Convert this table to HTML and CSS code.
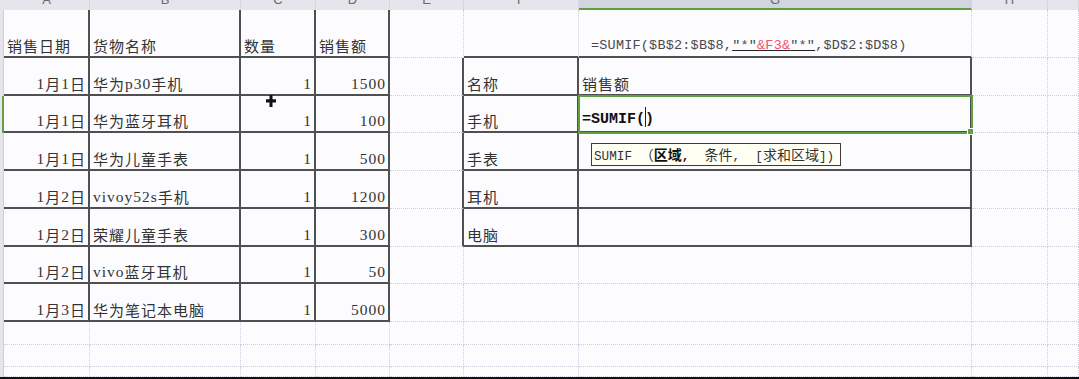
FILE: index.html
```html
<!DOCTYPE html>
<html lang="zh-CN">
<head>
    <meta charset="utf-8">
    <title>销售统计</title>
    <link rel="stylesheet" href="styles.css">
</head>
<body>
    <div id="sheet" class="sheet">
        <svg class="cross" width="10" height="12" viewBox="0 0 10 12">
            <path d="M3.5 0h3v4.2h3.5v3.2h-3.5v4.6h-3v-4.6h-3.5v-3.2h3.5z" fill="#111"/>
        </svg>
    </div>

    <script>
        const COLS = ['A', 'B', 'C', 'D', 'E', 'F', 'G', 'H', 'I'];
        const ROWS = 11;

        const data = {
            1: { A: '销售日期', B: '货物名称', C: '数量', D: '销售额' },
            2: { A: '1月1日', B: '华为p30手机', C: '1', D: '1500', F: '名称', G: '销售额' },
            3: { A: '1月1日', B: '华为蓝牙耳机', C: '1', D: '100', F: '手机' },
            4: { A: '1月1日', B: '华为儿童手表', C: '1', D: '500', F: '手表' },
            5: { A: '1月2日', B: 'vivoy52s手机', C: '1', D: '1200', F: '耳机' },
            6: { A: '1月2日', B: '荣耀儿童手表', C: '1', D: '300', F: '电脑' },
            7: { A: '1月2日', B: 'vivo蓝牙耳机', C: '1', D: '50' },
            8: { A: '1月3日', B: '华为笔记本电脑', C: '1', D: '5000' }
        };

        // cells holding markup instead of plain text
        const special = {
            G1: '<span class="formula">=SUMIF($B$2:$B$8,<u>"*"<em>&amp;F3&amp;</em>"*"</u>,$D$2:$D$8)</span>',
            G3: '<span class="edit">=SUMIF(<i class="caret"></i>)</span>' +
                '<div class="tip"><span class="m">SUMIF </span>（<b>区域<span class="m">,  </span></b>条件<span class="m">,  [</span>求和区域<span class="m">])</span></div>'
        };

        // half-width runs get the narrow latin font
        function latin(text) {
            return text.replace(/[A-Za-z0-9]+/g, m => `<span class="n">${m}</span>`);
        }

        function add(cls, html) {
            const div = document.createElement('div');
            div.className = cls;
            div.innerHTML = html;
            sheet.appendChild(div);
        }

        const sheet = document.getElementById('sheet');

        add('hd corner', '');
        COLS.forEach(c => add('hd' + (c === 'G' ? ' active' : ''), c === 'I' ? '' : `<span>${c}</span>`));

        for (let r = 1; r <= ROWS; r++) {
            add('rh' + (r === 3 ? ' active' : ''), '');
            COLS.forEach(c => {
                let cls = 'c';
                const left = r <= 8 && 'ABCD'.includes(c);
                const right = r >= 2 && r <= 6 && 'FG'.includes(c);
                if (left || right) cls += ' bd';
                if (r === 1 && 'FG'.includes(c)) cls += ' bd-b';
                if (r >= 2 && r <= 6 && c === 'E') cls += ' bd-r';
                if (r > 1 && 'ACD'.includes(c)) cls += ' right';
                if (c + r === 'G3') cls += ' sel';

                const key = c + r;
                let html = '';
                if (special[key]) html = special[key];
                else if (data[r] && data[r][c]) html = latin(data[r][c]);
                add(cls, html);
            });
        }
    </script>
</body>
</html>
```

FILE: styles.css
```css
html, body {
    margin: 0;
    padding: 0;
    background: #fcfcff;
}

.sheet {
    position: relative;
    width: 1079px;
    height: 379px;
    box-sizing: border-box;
    border-bottom: 2px solid #111;
    display: grid;
    grid-template-columns: 4px 86px 151px 75px 74px 74px 115px 393px 76px 1fr;
    grid-template-rows: 10px 48px 38px 37px 38px 38px 38px 37px 38px 23px 22px 1fr;
    overflow: hidden;
}

/* column letters, only their lower part shows */
.hd {
    background: #e5e5eb;
    border-right: 1px solid #d6d6de;
    box-sizing: border-box;
    overflow: hidden;
    display: flex;
    justify-content: center;
    align-items: flex-start;
    font: 13px "Liberation Sans", sans-serif;
    color: #6a6a6a;
}
.hd span {
    line-height: 13px;
    margin-top: -7px;
}
.hd.active {
    background: #d3d5de;
    border-bottom: 2px solid #5fa043;
}
.corner {
    border-right: none;
}

/* row header strip on the left */
.rh {
    background: #e5e5eb;
    border-right: 1px solid #cfcfd9;
    box-sizing: border-box;
}
.rh.active {
    border-right: 2px solid #5fa043;
}

.c {
    box-sizing: border-box;
    border-right: 1px dotted #cdcddc;
    border-bottom: 1px dotted #cdcddc;
    display: flex;
    align-items: flex-end;
    padding: 0 3px 1px;
    overflow: hidden;
    white-space: nowrap;
    font: 15px/18px "Noto Sans CJK SC", sans-serif;
    letter-spacing: 1px;
    color: #333;
}
.c.right {
    justify-content: flex-end;
    padding-right: 2px;
}

.c.bd {
    border-right: 2px solid #505050;
    border-bottom: 2px solid #505050;
}
.c.bd-b {
    border-bottom: 2px solid #505050;
}
.c.bd-r {
    border-right: 2px solid #505050;
}

.n {
    font-family: "Liberation Serif", serif;
    font-size: 15.5px;
    letter-spacing: 1px;
}

.formula {
    margin-left: 9px;
    margin-bottom: 1px;
    font: 13.5px/16px "Liberation Mono", monospace;
    letter-spacing: 0.2px;
    color: #4a4a4a;
}
.formula u {
    text-decoration-color: #222;
}
.formula em {
    font-style: normal;
    color: #f05068;
}

/* cell being edited */
.c.sel {
    position: relative;
    z-index: 2;
    overflow: visible;
    outline: 2px solid #5fa043;
    outline-offset: -1px;
    padding-bottom: 2px;
}
.c.sel::after {
    content: "";
    position: absolute;
    right: -4px;
    bottom: -4px;
    width: 5px;
    height: 5px;
    background: #5fa043;
    border: 1px solid #fcfcff;
}

.edit {
    font: bold 15px/18px "Liberation Mono", monospace;
    letter-spacing: 0;
    color: #111;
}
.caret {
    display: inline-block;
    width: 1px;
    height: 20px;
    margin: 0 -1px -4px 0;
    background: #222;
    vertical-align: baseline;
}

/* argument hint under the edited cell */
.tip {
    position: absolute;
    left: 12px;
    top: 47px;
    width: 250px;
    height: 23px;
    box-sizing: border-box;
    border: 1px solid #3c3c3c;
    background: #fffff4;
    padding: 0 2px;
    font: 14px/21px "Noto Sans CJK SC", sans-serif;
    letter-spacing: 0;
    white-space: pre;
    color: #333;
}
.tip .m {
    font-family: "Liberation Mono", monospace;
    font-size: 12.7px;
}
.tip b {
    color: #111;
}

.cross {
    position: absolute;
    left: 266px;
    top: 95px;
    z-index: 3;
}
```
